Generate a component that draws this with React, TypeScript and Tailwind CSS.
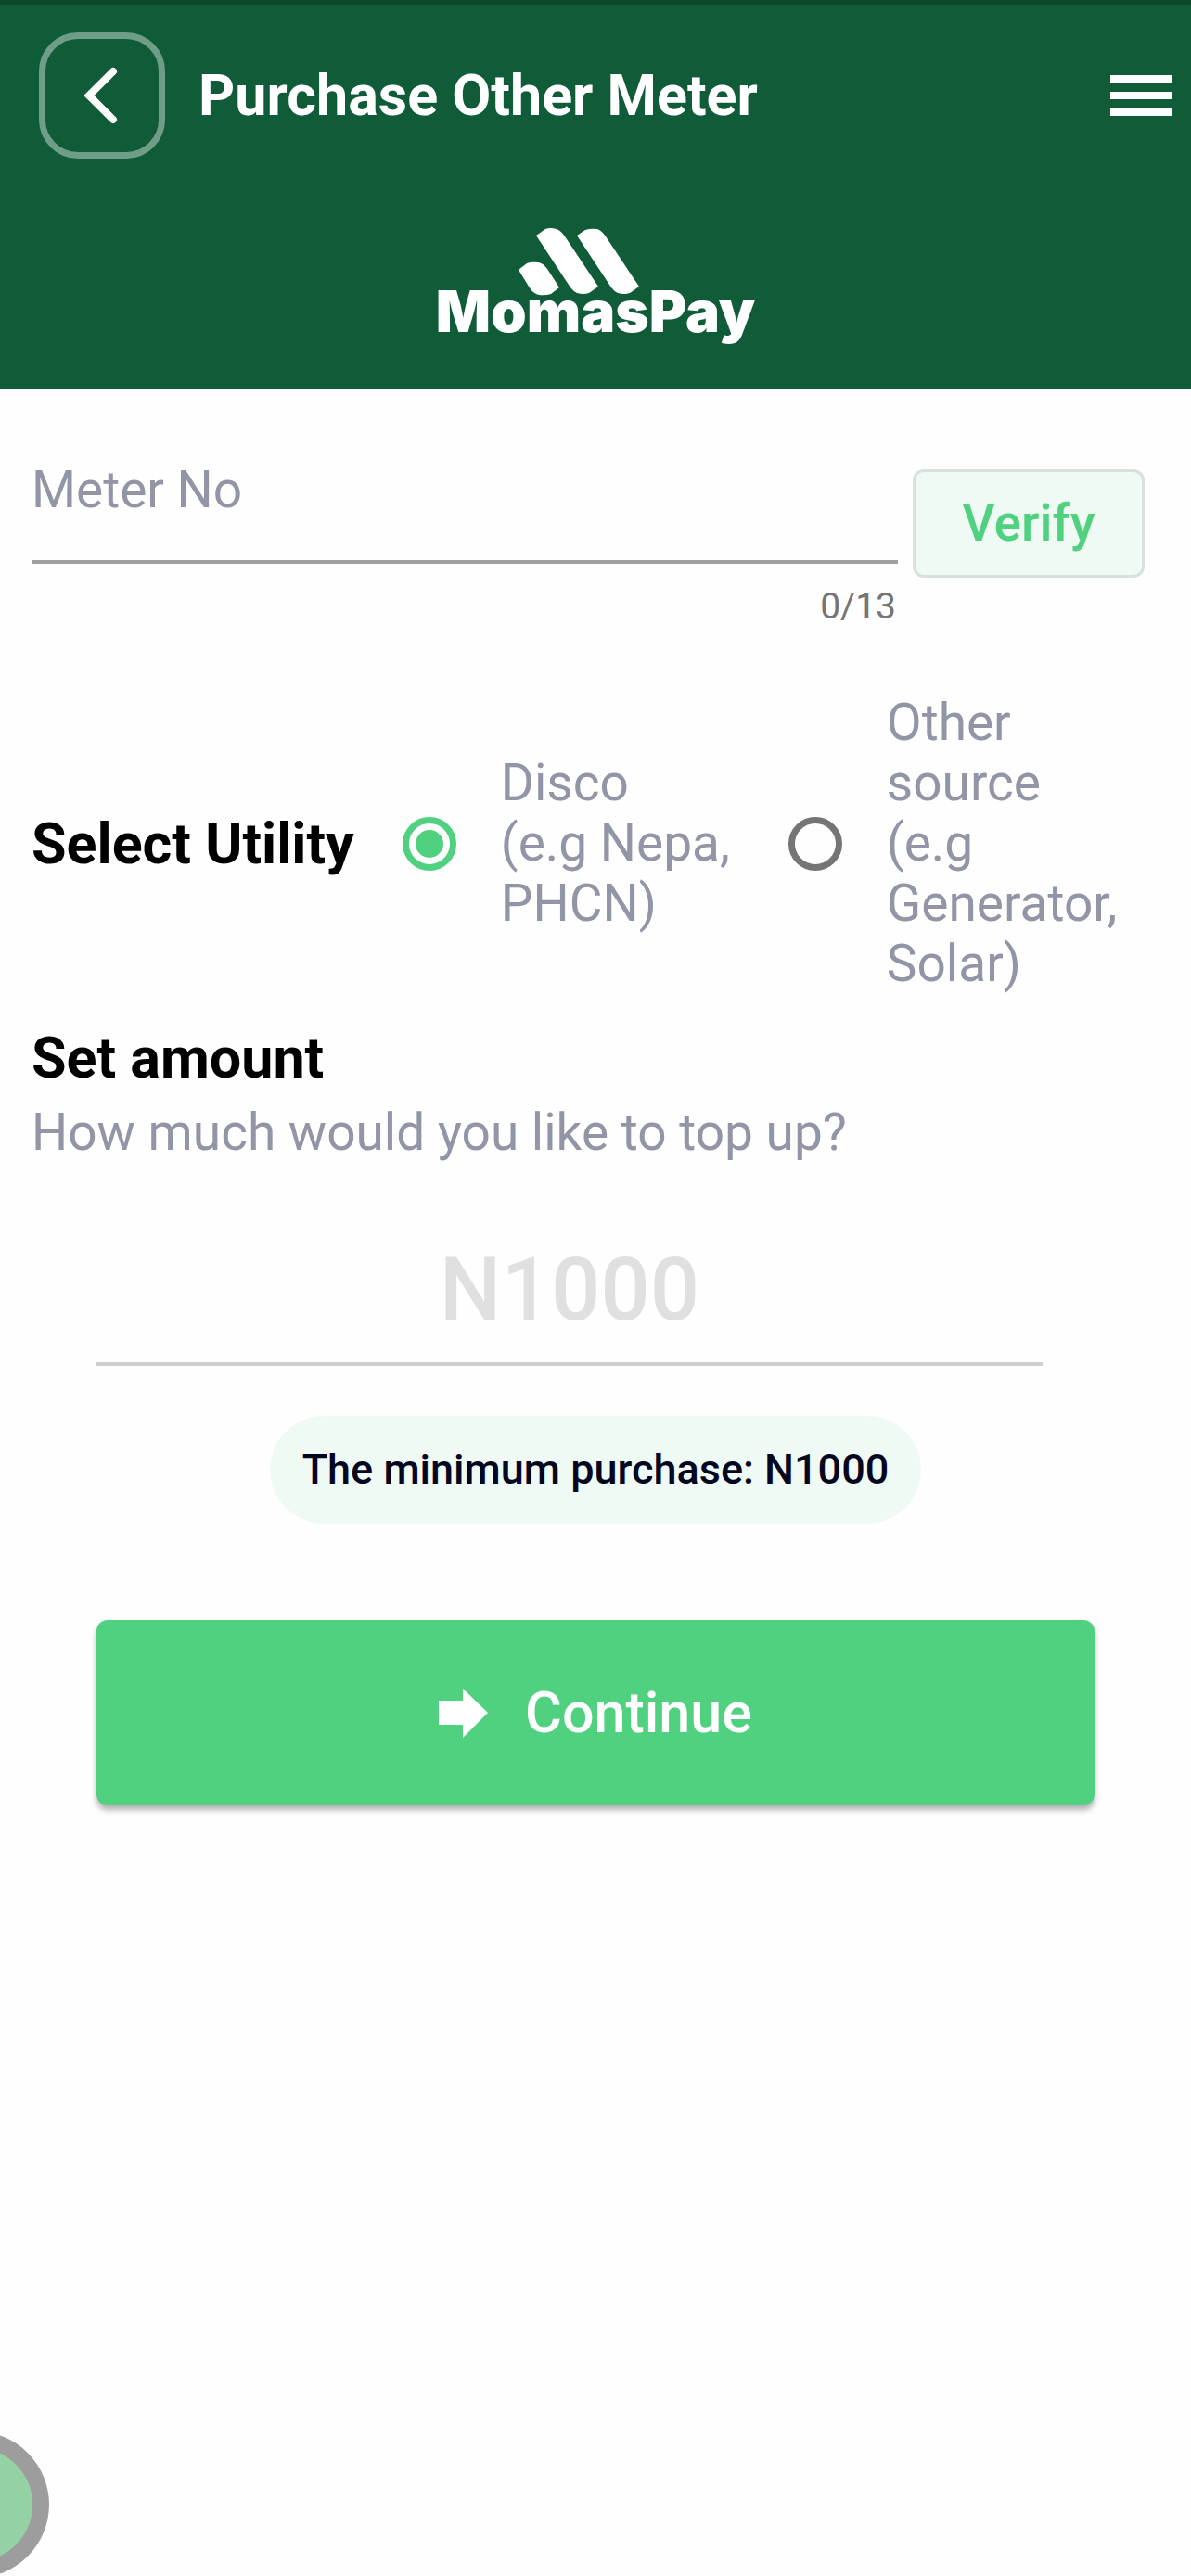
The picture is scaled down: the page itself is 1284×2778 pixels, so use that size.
import React, { useState } from "react";

function LogoMark() {
  return (
    <svg className="h-[74px] w-[132px]" viewBox="0 0 132 74" fill="#fff" aria-hidden="true">
      <path d="M1 45 L10 38 Q15 36 22 37 Q28 38 32 44 L45 64 L36 71 Q30 73 23 72 Q18 71 14 66 Z" />
      <path d="M20 8 L30 1 Q35 -1 42 1 Q47 3 51 9 L87 63 L77 70 Q71 72 64 70 Q60 68 57 64 Z" />
      <path d="M64 8 L73 2 Q79 0 86 1 Q91 3 95 9 L131 63 L121 70 Q115 72 108 70 Q104 68 101 64 Z" />
    </svg>
  );
}

export default function App() {
  const [meterNo, setMeterNo] = useState("");
  const [utility, setUtility] = useState("disco");
  const [amount, setAmount] = useState("");

  const radioStyle =
    "appearance-none shrink-0 size-[58px] rounded-full border-[7px] border-[#757575] p-[7px] bg-clip-content checked:border-[#4fd180] checked:bg-[#4fd180]";

  return (
    <div className="relative flex flex-col min-h-screen w-full overflow-hidden bg-[#fefefe] font-[Roboto,sans-serif]">
      <header className="flex flex-col w-full pb-12 bg-[#105c39] border-t-[5px] border-[#0c472b] text-white">
        <div className="flex items-center w-full pt-[30px] pl-[42px] pr-[20px]">
          <button
            type="button"
            aria-label="Back"
            className="flex items-center justify-center size-[136px] rounded-[42px] border-[7px] border-white/40"
          >
            <svg className="h-[64px] w-[38px]" viewBox="0 0 38 64" fill="none" aria-hidden="true">
              <path d="M31 6 L5 32 L31 58" stroke="#fff" strokeWidth="8" strokeLinecap="round" />
            </svg>
          </button>
          <h1 className="ml-9 grow text-[61px] leading-[72px] font-bold">Purchase Other Meter</h1>
          <button type="button" aria-label="Menu" className="flex flex-col gap-[10px] w-[67px]">
            <span className="h-[8px] w-full bg-white" />
            <span className="h-[8px] w-full bg-white" />
            <span className="h-[8px] w-full bg-white" />
          </button>
        </div>
        <div className="flex flex-col items-center pt-[75px]">
          <div className="pr-9">
            <LogoMark />
          </div>
          <span className="-mt-5 font-[Inter,sans-serif] text-[62px] leading-[72px] font-black">MomasPay</span>
        </div>
      </header>

      <main className="flex flex-col w-full pt-[76px]">
        <div className="flex items-start gap-4 pl-[34px] pr-[50px]">
          <div className="flex flex-col grow">
            <input
              type="text"
              aria-label="Meter No"
              placeholder="Meter No"
              maxLength={13}
              value={meterNo}
              onChange={(e) => setMeterNo(e.target.value)}
              className="w-full h-[112px] pb-[44px] border-b-4 border-[#a0a0a0] text-[55px] leading-[65px] text-black outline-none placeholder:text-[#9195a5] placeholder:opacity-100"
            />
            <span className="self-end pr-[2px] mt-[22px] text-[39px] leading-[48px] text-[#757575]">
              {meterNo.length}/13
            </span>
          </div>
          <button
            type="button"
            className="mt-[10px] w-[250px] h-[117px] rounded-[12px] border-[3px] border-[#d8e2dd] bg-[#f0faf5] text-[55px] leading-[65px] font-medium text-[#4fd180]"
          >
            Verify
          </button>
        </div>

        <div className="flex items-center mt-[69px] pl-[34px] pr-[50px]" role="radiogroup" aria-labelledby="utility">
          <h2 id="utility" className="shrink-0 text-[61px] leading-[72px] font-bold text-black">
            Select Utility
          </h2>
          <label className="flex items-center gap-12 ml-[52px] text-[55px] leading-[65px] text-[#9195a5]">
            <input
              type="radio"
              name="utility"
              checked={utility === "disco"}
              onChange={() => setUtility("disco")}
              className={radioStyle}
            />
            <span className="w-[258px]">
              Disco
              <br />
              (e.g Nepa, PHCN)
            </span>
          </label>
          <label className="flex items-center gap-12 ml-[52px] text-[55px] leading-[65px] text-[#9195a5]">
            <input
              type="radio"
              name="utility"
              checked={utility === "other"}
              onChange={() => setUtility("other")}
              className={radioStyle}
            />
            <span className="w-[258px]">Other source (e.g Generator, Solar)</span>
          </label>
        </div>

        <div className="flex flex-col mt-[33px] px-[34px]">
          <h2 className="text-[61px] leading-[72px] font-bold text-black">Set amount</h2>
          <label htmlFor="amount" className="mt-[12px] text-[55px] leading-[65px] text-[#9195a5]">
            How much would you like to top up?
          </label>
        </div>

        <div className="flex flex-col mt-[79px] px-[104px]">
          <div className="flex pr-14">
            <input
              id="amount"
              type="text"
              placeholder="N1000"
              value={amount}
              onChange={(e) => setAmount(e.target.value)}
              className="w-full h-[140px] pb-[21px] border-b-4 border-[#cecece] text-center text-[94px] leading-[112px] font-medium text-black outline-none placeholder:text-[#e0e0e0] placeholder:opacity-100"
            />
          </div>
          <p className="self-center mt-[54px] rounded-full bg-[#f0faf5] px-[35px] py-[32px] text-[45px] leading-[52px] font-medium text-[#05061f]">
            The minimum purchase: N1000
          </p>
          <button
            type="button"
            className="flex items-center justify-center gap-[40px] mt-[104px] h-[200px] rounded-[12px] bg-[#4fd180] shadow-[0_5px_6px_rgba(0,0,0,0.3)] text-[61px] leading-[72px] font-medium text-white"
          >
            <svg className="h-[53px] w-[53px]" viewBox="0 0 53 53" fill="#fff" aria-hidden="true">
              <path d="M0 13 H26 V0 L53 26 L26 53 V39 H0 Z" />
            </svg>
            Continue
          </button>
        </div>
      </main>

      {/* floating bubble docked to the left edge */}
      <div className="absolute -left-[105px] -bottom-[2px] size-[158px] rounded-full border-[18px] border-[#9d9d9d] bg-[#94d1a5]" />
    </div>
  );
}
